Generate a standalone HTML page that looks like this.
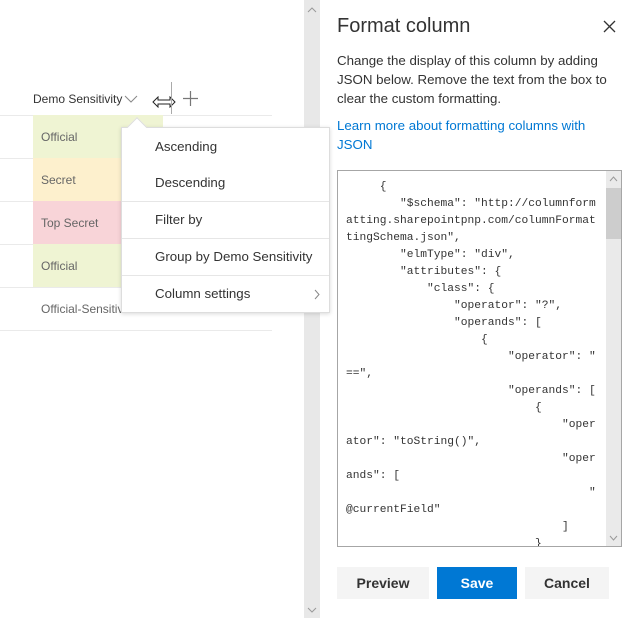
<!DOCTYPE html>
<html><head><meta charset="utf-8"><style>
*{margin:0;padding:0;box-sizing:border-box}
body{width:638px;height:618px;overflow:hidden;background:#fff;font-family:"Liberation Sans",sans-serif;position:relative;color:#333}
.a{position:absolute;white-space:nowrap}
.hl{position:absolute;left:0;width:272px;height:1px;background:#eaeaea}
.cell{position:absolute;left:33px;width:130px;height:43px;font-size:12px;color:#666;padding:15px 0 0 8px}
.mi{position:absolute;left:155px;font-size:13.3px;color:#333}
.md{position:absolute;left:122px;width:207px;height:1px;background:#e6e6e6}
pre{position:absolute;left:346px;top:179px;font-family:"Liberation Mono",monospace;font-size:11.25px;line-height:17px;color:#333}
.btn{position:absolute;top:567px;height:32px;font-size:14px;font-weight:bold;text-align:center;line-height:32px;background:#f4f4f4;color:#333}
</style></head><body>
<div class="a" style="left:304px;top:0;width:16px;height:618px;background:#e8e8e8"></div>
<svg class="a" style="left:307px;top:7px" width="10" height="6"><path d="M1 5l4-4 4 4" fill="none" stroke="#999"/></svg>
<svg class="a" style="left:307px;top:607px" width="10" height="6"><path d="M1 1l4 4 4-4" fill="none" stroke="#999"/></svg>

<div class="a" style="left:33px;top:92px;font-size:12px;color:#333">Demo Sensitivity</div>
<svg class="a" style="left:124px;top:95px" width="14" height="8"><path d="M1 1l6 6 6-6" fill="none" stroke="#888" stroke-width="1"/></svg>
<svg class="a" style="left:152px;top:96px" width="24" height="12"><path d="M1 6l5-5v3h12V1l5 5-5 5V8H6v3z" fill="#fff" stroke="#222" stroke-width="1"/></svg>
<div class="a" style="left:171px;top:82px;width:1px;height:32px;background:#aaa"></div>
<svg class="a" style="left:183px;top:91px" width="15" height="15"><path d="M7.5 0v15M0 7.5h15" stroke="#777" stroke-width="1.2"/></svg>
<div class="hl" style="top:115px"></div>
<div class="cell" style="top:115px;background:#eff4d3">Official</div>
<div class="hl" style="top:158px"></div>
<div class="cell" style="top:158px;background:#fdf0cd">Secret</div>
<div class="hl" style="top:201px"></div>
<div class="cell" style="top:201px;background:#f8d4d8">Top Secret</div>
<div class="hl" style="top:244px"></div>
<div class="cell" style="top:244px;background:#eff4d3">Official</div>
<div class="hl" style="top:287px"></div>
<div class="cell" style="top:287px">Official-Sensitive</div>
<div class="hl" style="top:330px"></div>

<div class="a" style="left:121px;top:127px;width:209px;height:186px;background:#fff;border:1px solid #ddd;box-shadow:0 1px 4px rgba(0,0,0,.15)"></div>
<div class="a" style="left:130px;top:120px;width:14px;height:14px;background:#fff;border-left:1px solid #ddd;border-top:1px solid #ddd;transform:rotate(45deg)"></div>
<div class="mi" style="top:139px">Ascending</div>
<div class="mi" style="top:175px">Descending</div>
<div class="md" style="top:201px"></div>
<div class="mi" style="top:212px">Filter by</div>
<div class="md" style="top:238px"></div>
<div class="mi" style="top:249px">Group by Demo Sensitivity</div>
<div class="md" style="top:275px"></div>
<div class="mi" style="top:286px">Column settings</div>
<svg class="a" style="left:314px;top:289px" width="6" height="11"><path d="M1 1l4 4.5L1 10" fill="none" stroke="#888"/></svg>

<div class="a" style="left:337px;top:15px;font-size:20px;color:#333;font-weight:300">Format column</div>
<svg class="a" style="left:603px;top:20px" width="13" height="13"><path d="M1 1l11 11M12 1L1 12" stroke="#333" stroke-width="1.3"/></svg>
<div class="a" style="left:337px;top:51px;font-size:13.3px;line-height:19px;color:#333">Change the display of this column by adding<br>JSON below. Remove the text from the box to<br>clear the custom formatting.</div>
<div class="a" style="left:337px;top:116px;font-size:13.3px;line-height:19px;color:#0078d4">Learn more about formatting columns with<br>JSON</div>

<div class="a" style="left:337px;top:170px;width:285px;height:377px;border:1px solid #a6a6a6;overflow:hidden">
<div class="a" style="right:0;top:0;width:15px;height:375px;background:#eaeaea"></div>
<div class="a" style="right:0;top:17px;width:15px;height:51px;background:#cdcdcd"></div>
<svg class="a" style="right:3px;top:5px" width="9" height="6"><path d="M1 5l3.5-4 3.5 4" fill="none" stroke="#999"/></svg>
<svg class="a" style="right:3px;top:364px" width="9" height="6"><path d="M1 1l3.5 4 3.5-4" fill="none" stroke="#999"/></svg>
</div>
<pre>     {
        "$schema": "http://columnform
atting.sharepointpnp.com/columnFormat
tingSchema.json",
        "elmType": "div",
        "attributes": {
            "class": {
                "operator": "?",
                "operands": [
                    {
                        "operator": "
==",
                        "operands": [
                            {
                                "oper
ator": "toString()",
                                "oper
ands": [
                                    "
@currentField"
                                ]
                            }</pre>
<div class="a" style="left:337px;top:546px;width:285px;height:30px;background:#fff"></div>
<div class="a" style="left:337px;top:546px;width:285px;height:1px;background:#a6a6a6"></div>

<div class="btn" style="left:337px;width:92px">Preview</div>
<div class="btn" style="left:437px;width:80px;background:#0078d4;color:#fff">Save</div>
<div class="btn" style="left:525px;width:84px">Cancel</div>
</body></html>
